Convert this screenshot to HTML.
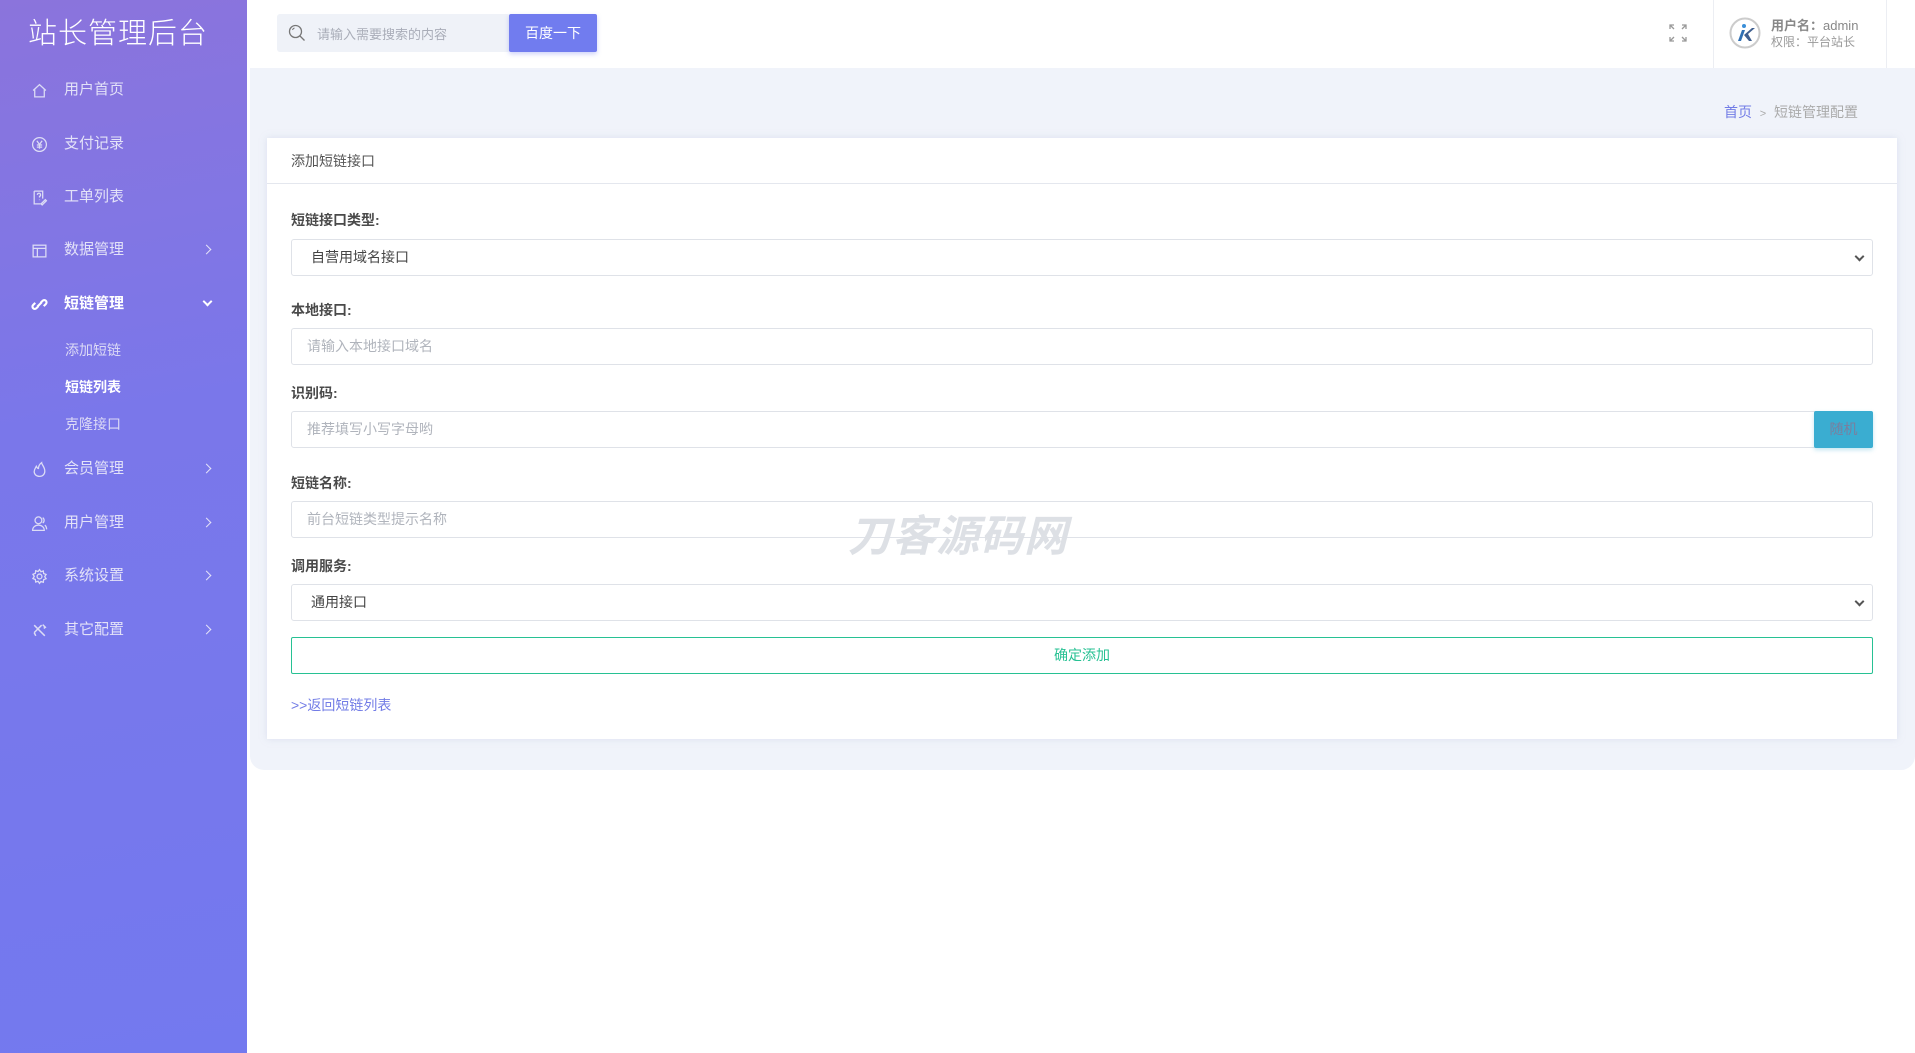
<!DOCTYPE html>
<html><head><meta charset="utf-8"><style>
*{box-sizing:border-box;margin:0;padding:0}
body{width:1915px;height:1053px;overflow:hidden;font-family:"Liberation Sans","Noto Sans CJK SC",sans-serif;background:#fff;position:relative;color:#555}
.bgband{position:absolute;left:250px;top:68px;right:0;height:702px;background:#f0f3fa;border-radius:0 0 14px 14px}
.side{position:absolute;left:0;top:0;width:247px;height:1053px;background:linear-gradient(170deg,#8b74dc 0%,#7a77ea 40%,#7379ef 100%)}
.logo{position:absolute;left:28px;top:10px;font-size:29px;color:#fff;letter-spacing:1px;font-weight:300}
.mi{position:absolute;left:0;width:247px;height:30px;color:#e3e2f8;font-size:15px;line-height:30px}
.mi .ic{position:absolute;left:31px;top:7px;width:17px;height:17px}
.mi .t{position:absolute;left:64px}
.mi .ar{position:absolute;left:203px;top:11px;width:7px;height:7px;border-right:1.6px solid #e3e2f8;border-top:1.6px solid #e3e2f8;transform:rotate(45deg)}
.mi .dn{position:absolute;left:204px;top:9px;width:7px;height:7px;border-right:2px solid #fff;border-bottom:2px solid #fff;transform:rotate(45deg)}
.sub{position:absolute;left:65px;font-size:14px;color:#dcdaf6}
.head{position:absolute;left:247px;top:0;right:0;height:68px;background:#fff}
.search{position:absolute;left:277px;top:14px;width:233px;height:38px;background:#eff2f8;border-radius:3px}
.search span{position:absolute;left:40px;top:10px;font-size:13px;color:#a9adb8}
.btn1{position:absolute;left:509px;top:14px;width:88px;height:38px;background:#717cef;color:#fff;font-size:14px;line-height:38px;text-align:center;border-radius:2px;box-shadow:0 2px 5px rgba(113,124,239,.35)}
.vd{position:absolute;top:0;width:1px;height:68px;background:#eceef3}
.card{position:absolute;left:267px;top:138px;width:1630px;height:601px;background:#fff;box-shadow:0 0 6px rgba(200,205,230,.5)}
.ch{height:46px;border-bottom:1px solid #e4e7ee;padding-left:24px;line-height:46px;font-size:14px;color:#555}
.lb{position:absolute;left:24px;font-size:14px;color:#4a4a4a;font-weight:600}
.in{position:absolute;left:24px;width:1582px;height:37px;border:1px solid #dfe2e8;border-radius:3px;font-size:14px;line-height:35px;padding-left:15px;color:#b0b4bc}
.sel{color:#444;padding-left:19px}
.sel:after{content:"";position:absolute;right:9px;top:13px;width:5px;height:5px;border-right:2px solid #555;border-bottom:2px solid #555;transform:rotate(45deg)}
</style></head><body>
<div class="bgband"></div>
<div class="side">
<div class="logo">站长管理后台</div>
<div class="mi" style="top:75px"><svg class="ic" viewBox="0 0 16 16" fill="none" stroke="#dcdcf5" stroke-width="1.2"><path d="M2 8L8 2.5 14 8M3.5 6.8V14h9V6.8"/></svg><span class="t">用户首页</span></div>
<div class="mi" style="top:129px"><svg class="ic" viewBox="0 0 16 16" fill="none" stroke="#dcdcf5" stroke-width="1.2"><circle cx="8" cy="8" r="6.5"/><path d="M5.5 4.5L8 8l2.5-3.5M8 8v4M5.5 8.5h5M5.5 10.5h5"/></svg><span class="t">支付记录</span></div>
<div class="mi" style="top:182px"><svg class="ic" viewBox="0 0 16 16" fill="none" stroke="#dcdcf5" stroke-width="1.2"><path d="M3 2h8v7M3 2v12h6"/><path d="M6 5.5a1.5 1.5 0 1 1 2 1.4V8M8 10v.5M9.5 14l4-4 1 1-4 4z"/></svg><span class="t">工单列表</span></div>
<div class="mi" style="top:235px"><svg class="ic" viewBox="0 0 16 16" fill="none" stroke="#dcdcf5" stroke-width="1.2"><rect x="2" y="3" width="12" height="11"/><path d="M2 6h12M6 6v8"/></svg><span class="t">数据管理</span><span class="ar"></span></div>
<div class="mi" style="top:289px;color:#fff;font-weight:bold"><svg class="ic" viewBox="0 0 16 16" fill="none" stroke="#fff" stroke-width="2"><path d="M7 9.5l-2 2a2 2 0 0 1-3-3l2-2M9 6.5l2-2a2 2 0 0 1 3 3l-2 2M6 10l4-4"/></svg><span class="t">短链管理</span><span class="dn"></span></div>
<div class="sub" style="top:340px">添加短链</div>
<div class="sub" style="top:377px;color:#fff;font-weight:bold">短链列表</div>
<div class="sub" style="top:414px">克隆接口</div>
<div class="mi" style="top:454px"><svg class="ic" viewBox="0 0 16 16" fill="none" stroke="#dcdcf5" stroke-width="1.2"><path d="M8 14.5c-3 0-5-2-5-4.5 0-2 1-3 2-5 .5 1 1 2 2 2 0-2 1-4 3-5.5 0 2 3 4 3 8 0 3-2 5-5 5z"/></svg><span class="t">会员管理</span><span class="ar"></span></div>
<div class="mi" style="top:508px"><svg class="ic" viewBox="0 0 16 16" fill="none" stroke="#dcdcf5" stroke-width="1.2"><circle cx="7" cy="5" r="3.2"/><path d="M1.5 14.5c0-3 2.5-5 5.5-5s5.5 2 5.5 5zM11 2.5a3 3 0 0 1 0 5M13 9.5c1 .8 1.7 2.5 1.7 4"/></svg><span class="t">用户管理</span><span class="ar"></span></div>
<div class="mi" style="top:561px"><svg class="ic" viewBox="0 0 16 16" fill="none" stroke="#dcdcf5" stroke-width="1.2"><circle cx="8" cy="8" r="2.3"/><path d="M8 1.5l1.3 2 2.3-.7.3 2.4 2.3.9-1.3 2 1.3 2-2.3.9-.3 2.4-2.3-.7L8 14.5l-1.3-2-2.3.7-.3-2.4-2.3-.9 1.3-2-1.3-2 2.3-.9.3-2.4 2.3.7z"/></svg><span class="t">系统设置</span><span class="ar"></span></div>
<div class="mi" style="top:615px"><svg class="ic" viewBox="0 0 16 16" fill="none" stroke="#dcdcf5" stroke-width="1.4"><path d="M3 3l10 10M10 3l-7 7M3 10l1.5 3M11 2.5l2.5 2.5-1.5 1"/></svg><span class="t">其它配置</span><span class="ar"></span></div>
</div>
<div class="head"></div>
<div class="search"><svg style="position:absolute;left:11px;top:10px" width="18" height="18" viewBox="0 0 18 18" fill="none" stroke="#777" stroke-width="1.3"><circle cx="7.5" cy="7.5" r="6"/><path d="M12 12l4.5 4.5"/><path d="M4.5 6a3 3 0 0 1 2-2" stroke-width="1"/></svg><span>请输入需要搜索的内容</span></div>
<div class="btn1">百度一下</div>
<svg style="position:absolute;left:1669px;top:24px" width="18" height="18" viewBox="0 0 18 18" fill="none" stroke="#999" stroke-width="1.3"><path d="M1 5V1h4M1 1l4 4M13 1h4v4M17 1l-4 4M1 13v4h4M1 17l4-4M17 13v4h-4M17 17l-4-4"/></svg>
<div class="vd" style="left:1713px"></div>
<div class="vd" style="left:1886px"></div>
<svg style="position:absolute;left:1729px;top:17px" width="32" height="32" viewBox="0 0 32 32"><circle cx="16" cy="16" r="14.5" fill="#fff" stroke="#ccc" stroke-width="2"/><path d="M9 24l4-11h3l-4 11z" fill="#2f6fb3"/><path d="M15 18l8-7h3l-7 6 4 7h-3z" fill="#3f5f8f"/><circle cx="15" cy="9" r="2" fill="#3a8fd8"/></svg>
<div style="position:absolute;left:1771px;top:15px;font-size:13px;color:#888;font-weight:bold">用户名：<span style="font-weight:normal">admin</span></div>
<div style="position:absolute;left:1771px;top:33px;font-size:12px;color:#999">权限：平台站长</div>
<div style="position:absolute;left:1724px;top:102px;font-size:14px;color:#aaa"><span style="color:#727ce6">首页</span> &nbsp;<span style="font-size:11px">&gt;</span>&nbsp; 短链管理配置</div>
<div class="card">
<div class="ch">添加短链接口</div>
<div class="lb" style="top:72px">短链接口类型:</div>
<div class="in sel" style="top:101px">自营用域名接口</div>
<div class="lb" style="top:162px">本地接口:</div>
<div class="in" style="top:190px">请输入本地接口域名</div>
<div class="lb" style="top:245px">识别码:</div>
<div class="in" style="top:273px">推荐填写小写字母哟</div>
<div style="position:absolute;left:1547px;top:273px;width:59px;height:37px;background:#3aadd1;color:#7b7e9e;font-size:14px;line-height:37px;text-align:center;border-radius:2px;box-shadow:0 2px 4px rgba(58,173,209,.3)">随机</div>
<div class="lb" style="top:335px">短链名称:</div>
<div class="in" style="top:363px">前台短链类型提示名称</div>
<div class="lb" style="top:418px">调用服务:</div>
<div class="in sel" style="top:446px">通用接口</div>
<div style="position:absolute;left:24px;top:499px;width:1582px;height:37px;border:1.5px solid #27c193;border-radius:2px;color:#27c193;font-size:14px;line-height:34px;text-align:center">确定添加</div>
<div style="position:absolute;left:24px;top:557px;font-size:14px;color:#727ce6">&gt;&gt;返回短链列表</div>
</div>
<div style="position:absolute;left:848px;top:502px;font-size:43px;font-weight:bold;font-style:italic;color:#dde0e5;letter-spacing:1px">刀客源码网</div>
</body></html>
